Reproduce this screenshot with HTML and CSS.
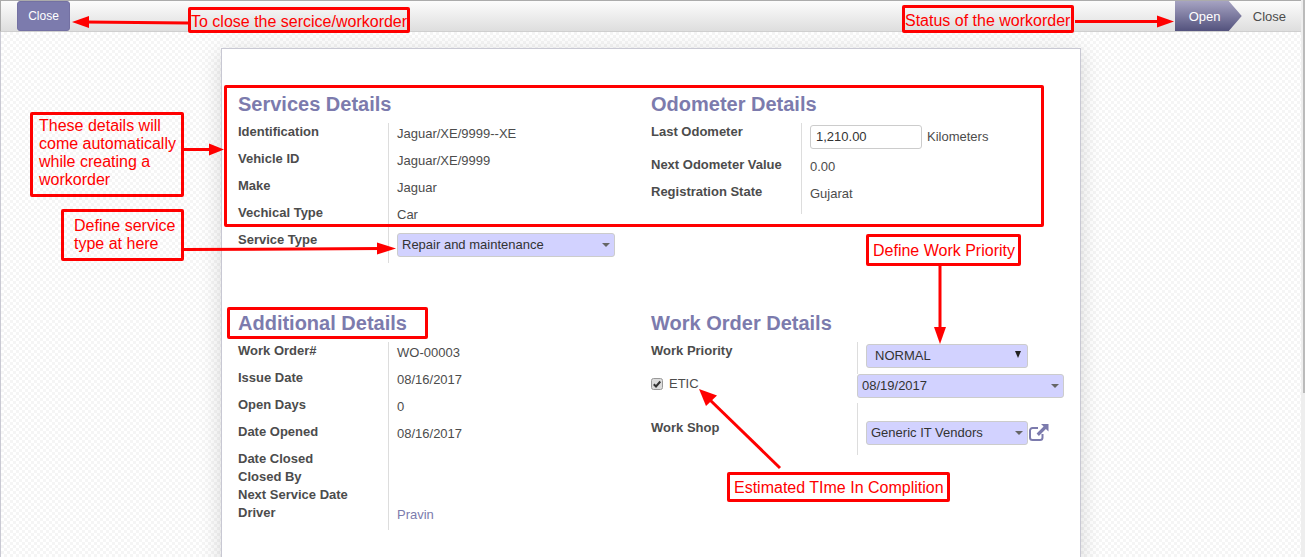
FILE: index.html
```html
<!DOCTYPE html>
<html lang="en">
<head>
    <meta charset="UTF-8">
    <meta name="viewport" content="width=device-width, initial-scale=1.0">
    <title>Work Order</title>
    <link rel="stylesheet" href="styles.css">
</head>
<body>
<div class="page">
    <div class="topbar">
        <button class="btn-close">Close</button>
        <div class="statusbar">
            <span class="status status-active">Open</span>
            <span class="status">Close</span>
        </div>
    </div>

    <div class="content">
        <div class="sheet">
            <div class="group">
                <h2>Services Details</h2>
                <div class="row"><div class="lbl">Identification</div><div class="val">Jaguar/XE/9999--XE</div></div>
                <div class="row"><div class="lbl">Vehicle ID</div><div class="val">Jaguar/XE/9999</div></div>
                <div class="row"><div class="lbl">Make</div><div class="val">Jaguar</div></div>
                <div class="row"><div class="lbl">Vechical Type</div><div class="val">Car</div></div>
                <div class="row row-service">
                    <div class="lbl">Service Type</div>
                    <div class="val val-control"><div class="select select-service">Repair and maintenance<i class="caret"></i></div></div>
                </div>
            </div>

            <div class="group">
                <h2>Odometer Details</h2>
                <div class="row row-odometer">
                    <div class="lbl">Last Odometer</div>
                    <div class="val val-control">
                        <input class="text-input" type="text" value="1,210.00">
                        <span class="unit">Kilometers</span>
                    </div>
                </div>
                <div class="row"><div class="lbl">Next Odometer Value</div><div class="val">0.00</div></div>
                <div class="row row-state"><div class="lbl">Registration State</div><div class="val">Gujarat</div></div>
            </div>

            <div class="group">
                <h2>Additional Details</h2>
                <div class="row"><div class="lbl">Work Order#</div><div class="val">WO-00003</div></div>
                <div class="row"><div class="lbl">Issue Date</div><div class="val">08/16/2017</div></div>
                <div class="row"><div class="lbl">Open Days</div><div class="val">0</div></div>
                <div class="row"><div class="lbl">Date Opened</div><div class="val">08/16/2017</div></div>
                <div class="row row-small"><div class="lbl">Date Closed</div><div class="val"></div></div>
                <div class="row row-small"><div class="lbl">Closed By</div><div class="val"></div></div>
                <div class="row row-small"><div class="lbl">Next Service Date</div><div class="val"></div></div>
                <div class="row row-driver"><div class="lbl">Driver</div><div class="val link">Pravin</div></div>
            </div>

            <div class="group">
                <h2>Work Order Details</h2>
                <div class="row row-priority">
                    <div class="lbl lbl-wide">Work Priority</div>
                    <div class="val val-control"><div class="select select-short">NORMAL<i class="caret caret-dark"></i></div></div>
                </div>
                <div class="row row-etic">
                    <div class="lbl lbl-wide lbl-check">
                        <svg class="check" width="12" height="12" viewBox="0 0 12 12">
                            <rect x="0.500" y="0.500" width="11" height="11" rx="2" fill="#dcdcdc" stroke="#999"/>
                            <path d="M2.800 6.200L5 8.500 9.300 3.500" fill="none" stroke="#333" stroke-width="2"/>
                        </svg>
                        <span>ETIC</span>
                    </div>
                    <div class="select select-date">08/19/2017<i class="caret"></i></div>
                </div>
                <div class="row row-shop">
                    <div class="lbl lbl-wide">Work Shop</div>
                    <div class="val val-control">
                        <div class="select select-shop">Generic IT Vendors<i class="caret"></i></div>
                        <svg class="ext-link" width="20" height="19" viewBox="0 0 20 19">
                            <path d="M13.500 11v3.500a2.500 2.500 0 0 1-2.500 2.500H3.500A2.500 2.500 0 0 1 1 14.500v-7A2.500 2.500 0 0 1 3.500 5H9" fill="none" stroke="#7c7bad" stroke-width="2"/>
                            <path d="M12 1H19.500v7.500l-2.600-2.600-7 7-2.300-2.300 7-7z" fill="#7c7bad"/>
                        </svg>
                    </div>
                </div>
            </div>
        </div>
    </div>
    <div class="scrollbar"><div class="scroll-thumb"></div></div>

    <!-- Anmerkungen ueber dem Screenshot -->
    <div class="note note-close">To close the sercice/workorder</div>
    <div class="note note-status">Status of the workorder</div>
    <div class="note note-auto">These details will come automatically while creating a workorder</div>
    <div class="note note-type">Define service type at here</div>
    <div class="note note-priority">Define Work Priority</div>
    <div class="note note-etic">Estimated TIme In Complition</div>
    <div class="frame frame-services"></div>
    <div class="frame frame-additional"></div>

    <svg class="arrows" width="1305" height="557" viewBox="0 0 1305 557">
        <g stroke="#f00" stroke-width="3" fill="none">
            <path d="M188 23L85 22"/>
            <path d="M1075 21.500H1160"/>
            <path d="M184 149.500H212"/>
            <path d="M184 249.500L382 248.500"/>
            <path d="M940 266V330"/>
            <path d="M780 468L709 399"/>
        </g>
        <g fill="#f00">
            <path d="M72 22L89 16V28z"/>
            <path d="M1174 21.500L1157 15.500V27.500z"/>
            <path d="M224 149.500L209 143.500V155.500z"/>
            <path d="M396 248.500L377 242.500V254.500z"/>
            <path d="M940 344L934 327H946z"/>
            <path d="M699 389L717 395.500 706 406z"/>
        </g>
    </svg>
</div>
</body>
</html>
```

FILE: styles.css
```css
* {
    box-sizing: border-box;
}

body {
    margin: 0;
    font-family: "Liberation Sans", Arial, sans-serif;
    font-size: 13px;
    color: #4c4c4c;
}

.page {
    position: relative;
    width: 1305px;
    height: 557px;
    overflow: hidden;
    display: flex;
    flex-direction: column;
    background: #fff;
}

.topbar {
    flex: none;
    width: 1301px;
    height: 32px;
    display: flex;
    justify-content: space-between;
    padding-left: 16px;
    border-top: 1px solid #ababab;
    border-left: 1px solid #ababab;
    border-bottom: 1px solid #cfcfcf;
    background: linear-gradient(#fcfcfc, #dedede);
}

.btn-close {
    width: 53px;
    height: 30px;
    border: 1px solid #7471a3;
    border-radius: 3px;
    background: #7c7bad;
    color: #fff;
    font: 12px "Liberation Sans", Arial, sans-serif;
    padding: 0;
}

.statusbar {
    display: flex;
}

.status {
    display: flex;
    align-items: center;
    height: 30px;
    padding: 0 15px 0 11px;
    font-size: 13px;
}

.status-active {
    width: 67px;
    padding: 0 0 0 14px;
    margin-right: 0;
    color: #fff;
    background: linear-gradient(#a6a3c2, #53527d);
    clip-path: polygon(0 0, 54px 0, 100% 50%, 54px 100%, 0 100%);
}

.content {
    flex: 1;
    width: 1301px;
    padding-top: 16px;
    border-left: 1px solid #c9c9d3;
    background: repeating-conic-gradient(#f5f5f5 0 25%, #fff 0 50%) 0 0 / 6px 6px;
}

.sheet {
    width: 860px;
    height: 600px;
    margin: 0 auto;
    padding: 41px 0 0 16px;
    display: grid;
    grid-template-columns: 413px 413px;
    grid-template-rows: 173px auto;
    row-gap: 46px;
    background: #fff;
    border: 1px solid #c8c8d3;
    box-shadow: 0 4px 20px rgba(0, 0, 0, 0.15);
}

h2 {
    margin: 0 0 5px;
    height: 28px;
    font-size: 20px;
    line-height: 28px;
    font-weight: bold;
    color: #7c7bad;
}

.row {
    display: flex;
    height: 27px;
}

.lbl {
    flex: none;
    width: 150px;
    padding-top: 1px;
    line-height: 16px;
    font-weight: bold;
}

.val {
    flex: none;
    width: 230px;
    padding: 3px 0 0 8px;
    line-height: 16px;
    border-left: 1px solid #ddd;
}

.val-control {
    display: flex;
    align-items: flex-start;
    padding-top: 2px;
}

.link {
    color: #7c7bad;
}

.row-service {
    height: 32px;
}

.row-odometer {
    height: 33px;
}

.row-state {
    height: 31px;
}

.row-small {
    height: 18px;
}

.row-driver {
    height: 26px;
}

.select {
    position: relative;
    height: 24px;
    line-height: 22px;
    padding-left: 4px;
    background: #d2d2ff;
    border: 1px solid #ccc;
    border-radius: 3px;
    color: #333;
    font-size: 13px;
}

.caret {
    position: absolute;
    top: 9px;
    right: 4px;
    border-top: 4px solid #666;
    border-left: 4px solid transparent;
    border-right: 4px solid transparent;
}

.caret-dark {
    top: 6px;
    right: 6px;
    border-top: 7px solid #222;
    border-left: 3px solid transparent;
    border-right: 3px solid transparent;
}

.select-service {
    width: 218px;
}

.text-input {
    width: 112px;
    height: 24px;
    padding: 0 4px 2px 5px;
    border: 1px solid #ccc;
    border-radius: 3px;
    font: 13px "Liberation Sans", Arial, sans-serif;
    color: #333;
}

.unit {
    margin-left: 5px;
    line-height: 24px;
}

.lbl-wide {
    width: 206px;
}

.row-priority {
    height: 32px;
}

.row-priority .val {
    width: 180px;
}

.select-short {
    width: 162px;
    padding-left: 8px;
}

.row-etic {
    height: 29px;
    align-items: flex-start;
}

.lbl-check {
    display: flex;
    align-items: center;
    gap: 6px;
    padding-top: 2px;
    font-weight: normal;
}

.check {
    flex: none;
}

.select-date {
    width: 207px;
}

.row-shop {
    height: 52px;
}

.row-shop .lbl {
    padding-top: 17px;
}

.row-shop .val {
    width: 200px;
    padding-top: 18px;
}

.select-shop {
    width: 162px;
}

.ext-link {
    margin: 2px 0 0 1px;
}

.scrollbar {
    position: absolute;
    top: 0;
    right: 0;
    width: 4px;
    height: 557px;
    background: #eee;
}

.scroll-thumb {
    width: 2px;
    height: 393px;
    margin-left: 2px;
    background: #bbb;
}

/* rote Anmerkungen */
.note,
.frame {
    position: absolute;
    border: 3px solid #f00;
    border-radius: 2px;
}

.note {
    color: #f00;
    font-size: 16px;
    line-height: 18px;
}

.note-close {
    left: 188px;
    top: 7px;
    width: 222px;
    height: 26px;
    padding: 3px 0 0 0;
    white-space: nowrap;
}

.note-status {
    left: 902px;
    top: 5px;
    width: 172px;
    height: 28px;
    padding: 4px 0 0 0;
    white-space: nowrap;
}

.note-auto {
    left: 30px;
    top: 112px;
    width: 154px;
    height: 85px;
    padding: 2px 0 0 6px;
}

.note-type {
    left: 61px;
    top: 209px;
    width: 123px;
    height: 52px;
    padding: 5px 0 0 10px;
}

.note-priority {
    left: 866px;
    top: 234px;
    width: 155px;
    height: 32px;
    padding: 5px 0 0 4px;
    white-space: nowrap;
}

.note-etic {
    left: 727px;
    top: 472px;
    width: 223px;
    height: 30px;
    padding: 4px 0 0 4px;
    background: #fff;
    white-space: nowrap;
}

.frame-services {
    left: 224px;
    top: 85px;
    width: 820px;
    height: 142px;
}

.frame-additional {
    left: 227px;
    top: 307px;
    width: 201px;
    height: 32px;
}

.arrows {
    position: absolute;
    left: 0;
    top: 0;
    pointer-events: none;
}
```
